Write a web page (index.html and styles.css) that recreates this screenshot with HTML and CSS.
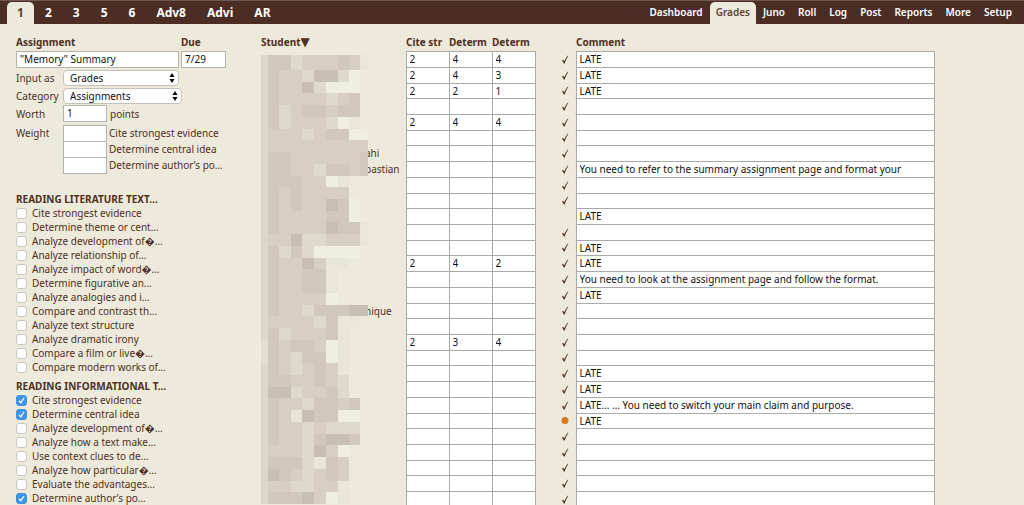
FILE: index.html
```html
<!DOCTYPE html>
<html lang="en">
<head>
<meta charset="utf-8">
<title>Grades</title>
<link rel="stylesheet" href="styles.css">
</head>
<body>
<header class="topbar">
  <nav class="tabs" aria-label="Classes">
    <a class="tab active" href="#">1</a><a class="tab" href="#">2</a><a class="tab" href="#">3</a><a class="tab" href="#">5</a><a class="tab" href="#">6</a><a class="tab" href="#">Adv8</a><a class="tab" href="#">Advi</a><a class="tab" href="#">AR</a>
  </nav>
  <nav class="menu" aria-label="Sections">
    <a class="tab" href="#">Dashboard</a><a class="tab active" href="#">Grades</a><a class="tab" href="#">Juno</a><a class="tab" href="#">Roll</a><a class="tab" href="#">Log</a><a class="tab" href="#">Post</a><a class="tab" href="#">Reports</a><a class="tab" href="#">More</a><a class="tab" href="#">Setup</a>
  </nav>
</header>
<main class="page">
  <form class="sidebar">
    <div class="title-row">
      <label for="name">Assignment</label><label for="due">Due</label>
      <input id="name" class="box" type="text" value="&quot;Memory&quot; Summary"><input id="due" class="box" type="text" value="7/29">
    </div>
    <div class="field">
      <label for="mode">Input as</label>
      <span class="picker mode"><select id="mode"><option>Grades</option></select><svg viewBox="0 0 6 10"><path d="M3 0 5.500 4H.5ZM3 10 .5 6h5Z"/></svg></span>
    </div>
    <div class="field">
      <label for="cat">Category</label>
      <span class="picker cat"><select id="cat"><option>Assignments</option></select><svg viewBox="0 0 6 10"><path d="M3 0 5.500 4H.5ZM3 10 .5 6h5Z"/></svg></span>
    </div>
    <div class="field">
      <label for="worth">Worth</label>
      <input id="worth" class="box small" type="text" value="1"><span class="unit">points</span>
    </div>
    <div class="weights">
      <span class="weights-title">Weight</span>
      <div class="weights-list">
        <div class="weight"><input id="w1" class="box small" type="text"><label for="w1">Cite strongest evidence</label></div>
        <div class="weight"><input id="w2" class="box small" type="text"><label for="w2">Determine central idea</label></div>
        <div class="weight"><input id="w3" class="box small" type="text"><label for="w3">Determine author’s po…</label></div>
      </div>
    </div>
    <h2 class="group">READING LITERATURE TEXT…</h2>
    <div class="checks">
      <label><input type="checkbox">Cite strongest evidence</label>
      <label><input type="checkbox">Determine theme or cent…</label>
      <label><input type="checkbox">Analyze development of�…</label>
      <label><input type="checkbox">Analyze relationship of…</label>
      <label><input type="checkbox">Analyze impact of word�…</label>
      <label><input type="checkbox">Determine figurative an…</label>
      <label><input type="checkbox">Analyze analogies and i…</label>
      <label><input type="checkbox">Compare and contrast th…</label>
      <label><input type="checkbox">Analyze text structure</label>
      <label><input type="checkbox">Analyze dramatic irony</label>
      <label><input type="checkbox">Compare a film or live�…</label>
      <label><input type="checkbox">Compare modern works of…</label>
    </div>
    <h2 class="group">READING INFORMATIONAL T…</h2>
    <div class="checks">
      <label><input type="checkbox" checked>Cite strongest evidence</label>
      <label><input type="checkbox" checked>Determine central idea</label>
      <label><input type="checkbox">Analyze development of�…</label>
      <label><input type="checkbox">Analyze how a text make…</label>
      <label><input type="checkbox">Use context clues to de…</label>
      <label><input type="checkbox">Analyze how particular�…</label>
      <label><input type="checkbox">Evaluate the advantages…</label>
      <label><input type="checkbox" checked>Determine author’s po…</label>
    </div>
  </form>
  <section class="book">
    <table class="grades">
      <colgroup><col class="c-name"><col class="c-score"><col class="c-score"><col class="c-score"><col class="c-mark"><col></colgroup>
      <thead>
        <tr><th>Student<span class="sort">▼</span></th><th>Cite str</th><th>Determ</th><th>Determ</th><th></th><th>Comment</th></tr>
      </thead>
      <tbody id="rows"></tbody>
    </table>
    <svg id="mosaic" class="mosaic" viewBox="0 0 108 449" shape-rendering="crispEdges" aria-hidden="true"></svg>
  </section>
</main>
<script src="main.js"></script>
</body>
</html>
```
FILE: styles.css
```css
* { box-sizing: border-box; }
body {
  margin: 0;
  height: 100vh;
  overflow: hidden;
  background: #edeadb;
  color: #4e3024;
  font: 10px/14px "Noto Sans", "Lucida Grande", sans-serif;
}
input, select { font: inherit; color: #111; margin: 0; }

.topbar {
  display: flex;
  justify-content: space-between;
  align-items: flex-end;
  height: 24px;
  padding: 0 6px 0 7px;
  background: #4c2d23;
  border-top: 1px solid #6d5850;
}
.tabs, .menu { display: flex; gap: 1px; }
.tab {
  height: 22px;
  line-height: 21px;
  padding: 0 6px;
  border-radius: 5px 5px 0 0;
  color: #fff;
  font-weight: 600;
  text-decoration: none;
}
.tabs .tab { padding: 0 10px; font-size: 12px; font-weight: 700; }
.tab.active { background: #edeadb; color: #5e4335; }

.page { display: flex; padding: 11px 89px 0 16px; }
.sidebar { flex: 0 0 245px; }
.title-row {
  display: grid;
  grid-template-columns: 163px 45px;
  column-gap: 2px;
  font-weight: 700;
}
.title-row label { height: 16px; }
.title-row .box { font-weight: 400; }
.box {
  min-width: 0;
  height: 17px;
  padding: 0 3px 1px;
  border: 1px solid #b4b4ac;
  background: #fff;
}
.small { width: 44px; }
.field { display: flex; align-items: center; margin-top: 1px; height: 17px; }
.field label, .weights-title { width: 47px; }
.picker { position: relative; height: 16px; }
.picker select {
  display: block;
  width: 100%;
  height: 16px;
  padding: 0 6px;
  appearance: none;
  border: 1px solid #c4c2b8;
  border-radius: 4px;
  background: #fff;
}
.picker svg { position: absolute; right: 4px; top: 3px; width: 6px; height: 10px; }
.mode { width: 116px; }
.cat { width: 119px; }
.unit { margin-left: 3px; }
.weights { display: flex; margin-top: 3px; }
.weights-title { line-height: 17px; }
.weight { display: flex; height: 16px; }
.weight label { margin-left: 2px; line-height: 16px; }
.group { margin: 19px 0 0; font-size: 10px; line-height: 14px; font-weight: 700; }
.checks + .group { margin-top: 5px; }
.checks label { display: flex; align-items: center; height: 14px; white-space: nowrap; }
.checks input {
  appearance: none;
  width: 11px;
  height: 11px;
  margin: 0 5px 0 0;
  border: 1px solid #c9c7bd;
  border-radius: 3px;
  background: #fff;
}
.checks input:checked {
  border-color: #3f93e4;
  background: #3f93e4 url("data:image/svg+xml,%3Csvg xmlns='http://www.w3.org/2000/svg' viewBox='0 0 9 9'%3E%3Cpath d='M2 4.800 3.800 6.800 7 2' fill='none' stroke='white' stroke-width='1.300'/%3E%3C/svg%3E");
}

.book { position: relative; flex: 1; min-width: 0; }
.grades { width: 100%; table-layout: fixed; border-collapse: collapse; }
.c-name { width: 145px; }
.c-score { width: 43px; }
.c-mark { width: 41px; }
.grades th {
  height: 16px;
  padding: 0 5px 2px 0;
  overflow: hidden;
  text-align: left;
  white-space: nowrap;
  line-height: 14px;
}
.sort { font: 12px/12px "DejaVu Sans", sans-serif; }
.grades td { height: 16px; padding: 0; line-height: 14px; }
.grades tr:nth-child(7n+3) td, .grades tr:nth-child(7n+6) td { height: 15px; }
.grades .name { padding: 0 0 1px 104px; }
.grades .cell { border: 1px solid #a9aba8; background: #fff; }
.cell input {
  display: block;
  width: 100%;
  height: 14px;
  padding: 0 3px 1px;
  border: 0;
  background: none;
}
.mark svg { display: block; width: 8px; height: 9px; margin: 0 7px 1px auto; }
.mosaic { position: absolute; left: 0; top: 20px; width: 108px; height: 449px; }
```
FILE: main.js
```js
const scores = { 0: [2, 4, 4], 1: [2, 4, 3], 2: [2, 2, 1], 4: [2, 4, 4], 13: [2, 4, 2], 18: [2, 3, 4] };
const names = { 6: "ahi", 7: "bastian", 16: "nique" };
const late = [0, 1, 2, 10, 12, 13, 15, 20, 21, 23];
const comments = {
  7: "You need to refer to the summary assignment page and format your",
  14: "You need to look at the assignment page and follow the format.",
  22: "LATE… … You need to switch your main claim and purpose."
};
const tick = '<svg viewBox="0 0 8 9"><path d="M1 5.300 2.200 4.800 3.100 6.600Q4.500 3 6.900.4L7.400.8Q5 4 3.700 8.600H2.800Z" fill="#4e3024"/></svg>';
const dot = '<svg viewBox="0 0 8 9"><circle cx="4" cy="4.500" r="3.500" fill="#d87a1a"/></svg>';

let html = "";
for (let i = 0; i < 29; i++) {
  const mark = i === 10 ? "" : i === 23 ? dot : tick;
  const comment = late.includes(i) ? "LATE" : comments[i] || "";
  html += `<tr><td class="name">${names[i] || ""}</td>`;
  for (let s = 0; s < 3; s++) {
    html += `<td class="cell"><input type="text" aria-label="Score ${s + 1}" value="${scores[i] ? scores[i][s] : ""}"></td>`;
  }
  html += `<td class="mark">${mark}</td><td class="cell"><input type="text" aria-label="Comment" value="${comment}"></td></tr>`;
}
document.getElementById("rows").innerHTML = html;

// Tiles that hide the student names, one letter per shade.
const shades = { a: "#f0eee1", b: "#e9e6d9", c: "#dfd9cc", d: "#d7cfc4", e: "#d0c8bd", f: "#c8bfb4" };
const tiles = [
  "deecdddedb", "deddcffca.", "deddfcaaa.", "deddddcde.", "decdeedee.", "decdddcab.", "ddddcdeeaa", "dddddddddd",
  "deedddddde", "deeddceede", "deeeddab..", "dededddd..", "dededdfea.", "deddddeea.", "deddddfeeb", "dddfccdddb",
  "dececaaaa.", "deddfdbb..", "deddeeb...", "deddeeb...", "dedddda...", "deddceeeff", "dddddcebb.", "decdddeb..",
  "cedeedab..", "cedceeab..", "dedcdedb..", "deeddedc..", "dffcddec..", "deddceede.", "dedbfeeaa.", "deddcdccc.",
  "deddceffe.", "ddddcfda..", "deeecbed..", "dfedcded..", "dddccddb..", "deeefdab.."
];
const xs = [0, 7, 18, 30, 41, 53, 65, 77, 88, 99, 107];
const yAt = n => n === 0 ? 0 : Math.round(15 + (n - 1) * 11.73);
let rects = "";
tiles.forEach((line, r) => {
  for (let c = 0; c < 10; c++) {
    if (line[c] === ".") continue;
    const faded = c === 0 ? ' opacity=".75"' : "";
    rects += `<rect x="${xs[c]}" y="${yAt(r)}" width="${xs[c + 1] - xs[c]}" height="${yAt(r + 1) - yAt(r)}" fill="${shades[line[c]]}"${faded}/>`;
  }
});
document.getElementById("mosaic").innerHTML = rects;
```
